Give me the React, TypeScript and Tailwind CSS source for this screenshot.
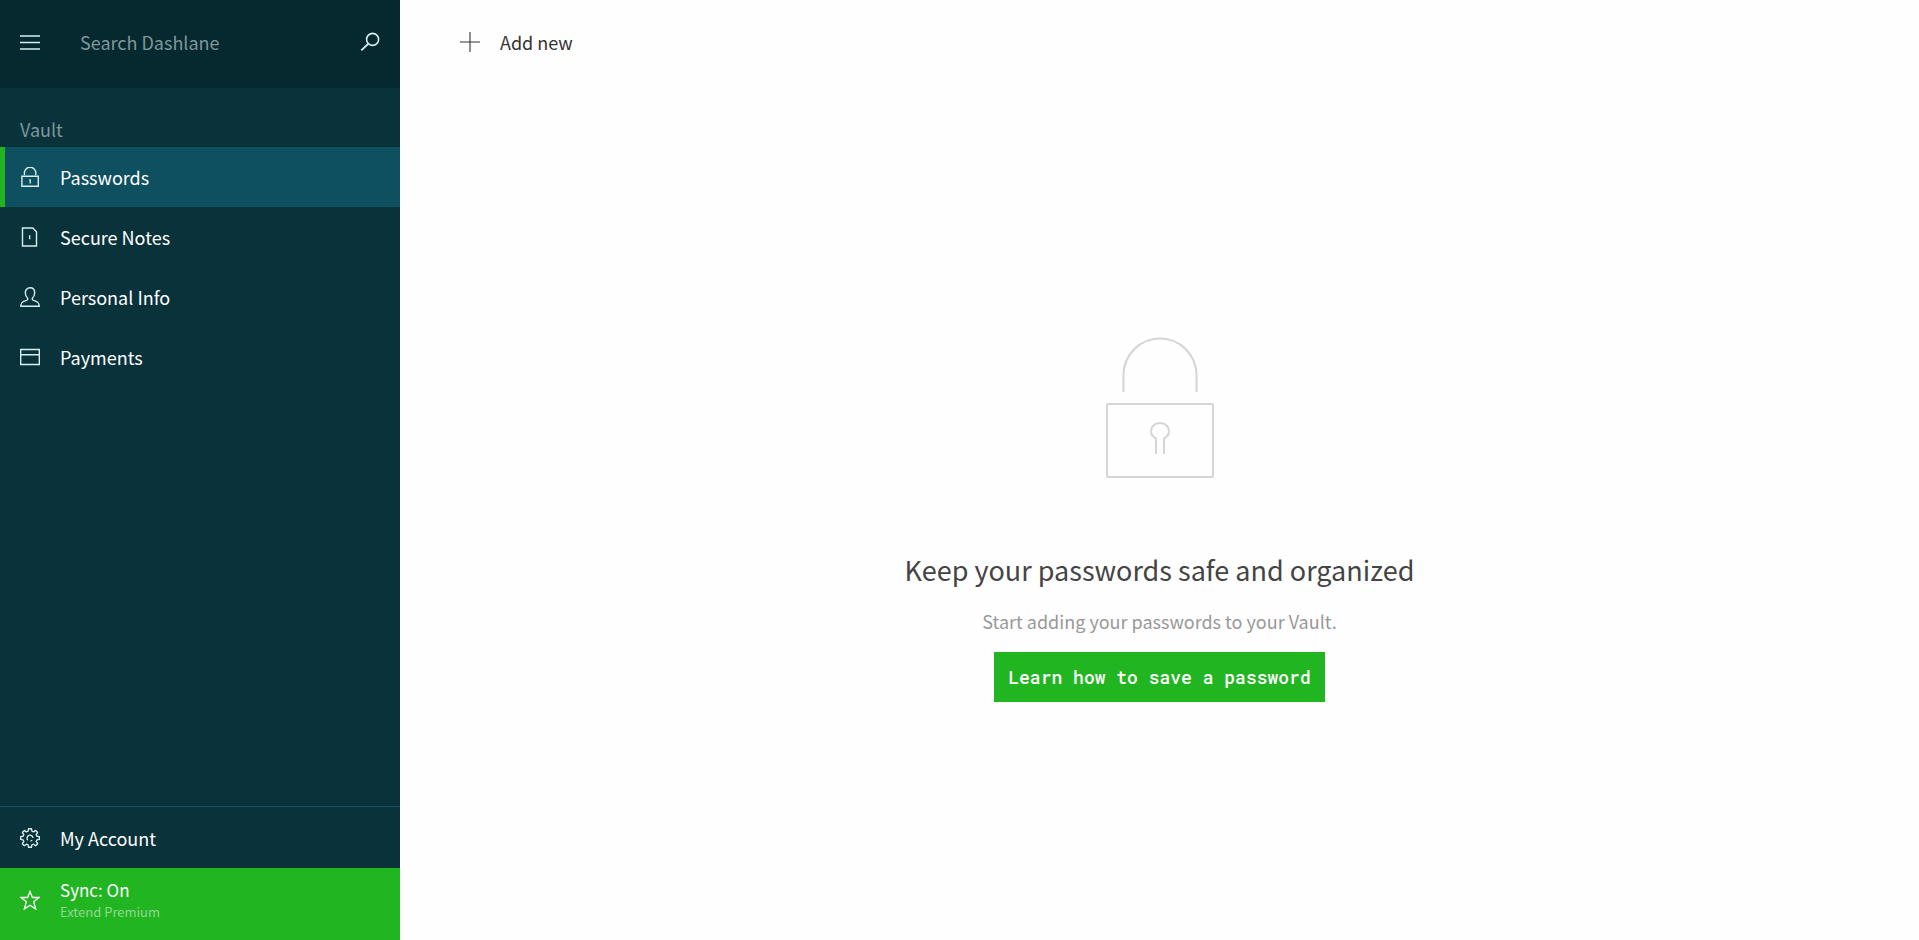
import React, { useState } from 'react';

type IconProps = { className?: string };

const VAULT_ITEMS = [
  { label: 'Passwords', Icon: LockIcon },
  { label: 'Secure Notes', Icon: NoteIcon },
  { label: 'Personal Info', Icon: PersonIcon },
  { label: 'Payments', Icon: CardIcon },
];

function MenuIcon({ className }: IconProps) {
  return (
    <svg viewBox="0 0 20 20" fill="none" stroke="currentColor" className={className} aria-hidden="true">
      <path d="M0 4h20M0 10.5h20M0 17h20" strokeWidth="1.4" />
    </svg>
  );
}

function SearchIcon({ className }: IconProps) {
  return (
    <svg viewBox="0 0 20 20" fill="none" stroke="currentColor" className={className} aria-hidden="true">
      <circle cx="12.6" cy="7.4" r="6" strokeWidth="1.6" />
      <path d="M8 12L1.3 18.4" strokeWidth="1.8" />
    </svg>
  );
}

function LockIcon({ className }: IconProps) {
  return (
    <svg viewBox="0 0 20 20" fill="none" stroke="currentColor" className={className} aria-hidden="true">
      <path d="M1.9 9.3h16.4v10H1.9zM4.4 8V6a5.7 5.7 0 0 1 11.4 0v2" strokeWidth="1.4" />
      <path d="M10.2 12.2v4.2M9.3 12.8h1.6" strokeWidth="1.3" />
    </svg>
  );
}

function NoteIcon({ className }: IconProps) {
  return (
    <svg viewBox="0 0 20 20" fill="none" stroke="currentColor" className={className} aria-hidden="true">
      <path d="M2.5 1h10.3l3.7 3.8V19h-14z" strokeWidth="1.4" />
      <path d="M9.7 8.2v4M8.9 9.2h1.2" strokeWidth="1.3" />
    </svg>
  );
}

function PersonIcon({ className }: IconProps) {
  return (
    <svg viewBox="0 0 20 20" fill="none" stroke="currentColor" className={className} aria-hidden="true">
      <path
        d="M7.7 11.2C6.1 9.9 5.3 8 5.3 5.8 5.3 2.9 7.2.8 10 .8s4.7 2.1 4.7 5c0 2.2-.8 4.1-2.4 5.4v1.4c0 .6 1 .9 2.5 1.3 2.9.8 4.3 1.6 4.5 5.4H.7c.2-3.8 1.6-4.6 4.5-5.4 1.5-.4 2.5-.7 2.5-1.3z"
        strokeWidth="1.4"
        strokeLinejoin="round"
      />
    </svg>
  );
}

function CardIcon({ className }: IconProps) {
  return (
    <svg viewBox="0 0 20 20" fill="none" stroke="currentColor" className={className} aria-hidden="true">
      <path d="M.7 2.5h18.6v15H.7zM.7 7.8h18.6" strokeWidth="1.4" />
    </svg>
  );
}

function GearIcon({ className }: IconProps) {
  return (
    <svg viewBox="0 0 20 20" fill="none" stroke="currentColor" className={className} aria-hidden="true">
      <path
        d="M8.6.7h2.8l.5 2.5 1.7.7 2.1-1.5 2 2-1.5 2.1.7 1.7 2.4.4v2.8l-2.4.5-.7 1.7 1.5 2.1-2 2-2.1-1.5-1.7.7-.5 2.4H8.6l-.5-2.4-1.7-.7-2.1 1.5-2-2 1.5-2.1-.7-1.7-2.4-.5V8.6l2.4-.4.7-1.7-1.5-2.1 2-2 2.1 1.5 1.7-.7z"
        strokeWidth="1.4"
        strokeLinejoin="round"
      />
      <path d="M7.8 12.2A3 3 0 1 1 13 10M10.5 13a3 3 0 0 0 1.700-.9" strokeWidth="1.3" />
    </svg>
  );
}

function StarIcon({ className }: IconProps) {
  return (
    <svg viewBox="0 0 20 20" fill="none" stroke="currentColor" className={className} aria-hidden="true">
      <path d="M10 1.5l2.4 6h6.5l-5.2 4.3 2 7.2L10 15.2 4.300 19l2-7.200L1.100 7.500h6.500z" strokeWidth="1.3" />
    </svg>
  );
}

function PlusIcon({ className }: IconProps) {
  return (
    <svg viewBox="0 0 20 20" fill="none" stroke="currentColor" className={className} aria-hidden="true">
      <path d="M10 0v20M0 10h20" strokeWidth="1.1" />
    </svg>
  );
}

function BigLock({ className }: IconProps) {
  return (
    <svg viewBox="0 0 108 142" fill="none" stroke="currentColor" className={className} aria-hidden="true">
      <path d="M17.5 55V38a36.5 36.5 0 0 1 73 0v17" strokeWidth="2" />
      <rect x="1" y="67" width="106" height="73" rx="1" strokeWidth="2" />
      <path d="M50 117v-15.5c-3-1.5-5-4.5-5-7.5a9 8 0 0 1 18 0c0 3-2 6-5 7.5V117" strokeWidth="2" />
    </svg>
  );
}

export default function App() {
  const [active, setActive] = useState('Passwords');

  return (
    <div className="flex min-h-screen bg-[#fefefe] font-['Noto_Sans_CJK_SC',sans-serif] text-lg leading-6">
      <aside className="flex w-100 shrink-0 flex-col bg-[#09323a] text-white">
        <div className="flex h-22 items-center bg-[#06282f] px-5 pb-1 text-[#d5eef0]">
          <button aria-label="Menu" className="mr-10">
            <MenuIcon className="size-5" />
          </button>
          <input
            type="search"
            aria-label="Search Dashlane"
            placeholder="Search Dashlane"
            className="min-w-0 flex-1 bg-transparent outline-none placeholder:text-[#7f979c]"
          />
          <button aria-label="Search">
            <SearchIcon className="size-5" />
          </button>
        </div>

        <nav className="flex-1">
          <h2 className="px-5 pt-[29px] pb-[6px] text-[#7f979c]">Vault</h2>
          {VAULT_ITEMS.map(({ label, Icon }) => (
            <button
              key={label}
              onClick={() => setActive(label)}
              className={`flex h-15 w-full items-center gap-5 border-l-5 pl-[15px] ${
                active === label ? 'border-[#22b522] bg-[#0e4f60]' : 'border-transparent'
              }`}
            >
              <Icon className="size-5 text-[#d5eef0]" />
              {label}
            </button>
          ))}
        </nav>

        <button className="flex h-[62px] items-center gap-5 border-t border-[#0e4f60] px-5">
          <GearIcon className="size-5 text-[#d5eef0]" />
          My Account
        </button>
        <button className="flex h-18 items-center gap-5 bg-[#22b522] px-5 pb-2 text-left">
          <StarIcon className="size-5" />
          <span className="flex flex-col">
            <span className="text-[17px] leading-6">Sync: On</span>
            <span className="text-[13px] leading-5 text-[#90da90]">Extend Premium</span>
          </span>
        </button>
      </aside>

      <main className="flex flex-1 flex-col">
        <header className="flex h-22 items-center px-15 pb-1">
          <button className="flex items-center gap-5 text-[#333]">
            <PlusIcon className="size-5" />
            Add new
          </button>
        </header>
        <section className="flex flex-1 flex-col items-center justify-center pt-[10px] text-center">
          <BigLock className="h-[142px] w-[108px] text-[#d5d5d5]" />
          <h1 className="mt-[71px] text-[27px] leading-10 text-[#444]">Keep your passwords safe and organized</h1>
          <p className="mt-[19px] text-[#999]">Start adding your passwords to your Vault.</p>
          <button className="mt-[19px] bg-[#22b522] px-[14px] py-3 font-['Roboto_Mono','Liberation_Mono',monospace] leading-[26px] font-medium text-white">
            Learn how to save a password
          </button>
        </section>
      </main>
    </div>
  );
}
